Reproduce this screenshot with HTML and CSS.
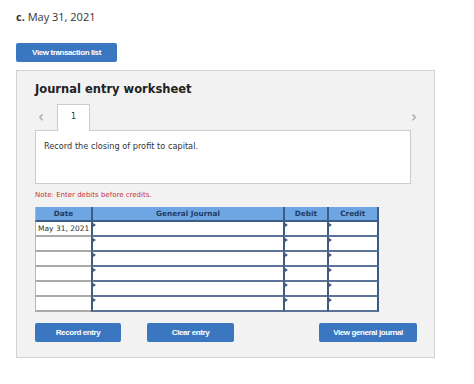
FILE: index.html
```html
<!DOCTYPE html>
<html lang="en">
<head>
    <meta charset="UTF-8">
    <title>Journal entry worksheet</title>
    <link rel="stylesheet" href="styles.css">
</head>
<body>
    <p class="part"><b>c.</b> May 31, 2021</p>
    <button class="btn btn-list">View transaction list</button>

    <div class="worksheet">
        <h2>Journal entry worksheet</h2>
        <div class="tabs">
            <span class="arrow">&lsaquo;</span>
            <span class="tab">1</span>
            <span class="arrow arrow-right">&rsaquo;</span>
        </div>
        <div class="task">Record the closing of profit to capital.</div>
        <p class="note">Note: Enter debits before credits.</p>

        <table class="journal">
            <tr>
                <th class="c-date">Date</th>
                <th class="c-gj">General Journal</th>
                <th class="c-amt">Debit</th>
                <th class="c-amt">Credit</th>
            </tr>
            <tr>
                <td class="date">May 31, 2021</td>
                <td class="inp"></td><td class="inp"></td><td class="inp"></td>
            </tr>
            <tr><td class="date"></td><td class="inp"></td><td class="inp"></td><td class="inp"></td></tr>
            <tr><td class="date"></td><td class="inp"></td><td class="inp"></td><td class="inp"></td></tr>
            <tr><td class="date"></td><td class="inp"></td><td class="inp"></td><td class="inp"></td></tr>
            <tr><td class="date"></td><td class="inp"></td><td class="inp"></td><td class="inp"></td></tr>
            <tr><td class="date"></td><td class="inp"></td><td class="inp"></td><td class="inp"></td></tr>
        </table>

        <div class="actions">
            <button class="btn btn-record">Record entry</button>
            <button class="btn btn-clear">Clear entry</button>
            <button class="btn btn-view">View general journal</button>
        </div>
    </div>
</body>
</html>
```

FILE: styles.css
```css
body {
    margin: 0;
    padding: 0 0 0 16px;
    background-color: #ffffff;
    font-family: "Open Sans", Arial, sans-serif;
    color: #333333;
}
.part {
    margin: 0;
    padding-top: 9px;
    height: 34px;
    font-size: 11px;
    line-height: 16px;
}
.part b {
    font-weight: 700;
}
.btn {
    display: block;
    height: 19px;
    padding: 0;
    border: none;
    border-radius: 2px;
    background-color: #3b77c0;
    color: #ffffff;
    font-family: "Liberation Sans", Arial, sans-serif;
    font-size: 8px;
    font-weight: bold;
    letter-spacing: -0.4px;
    cursor: pointer;
}
.btn-list {
    width: 101px;
}
.worksheet {
    box-sizing: border-box;
    width: 419px;
    height: 288px;
    margin-top: 8px;
    padding: 0 17px 0 18px;
    border: 1px solid #d3d3d3;
    background-color: #f2f2f2;
}
.worksheet h2 {
    margin: 10px 0 0 0;
    font-family: "DejaVu Sans", Verdana, sans-serif;
    font-size: 11.5px;
    line-height: 16px;
    color: #222222;
}
.tabs {
    display: flex;
    align-items: center;
    height: 26px;
    margin-top: 7px;
}
.arrow {
    width: 22px;
    padding-left: 3px;
    font-family: "DejaVu Sans", sans-serif;
    font-size: 15px;
    color: #999999;
    line-height: 20px;
    box-sizing: border-box;
}
.arrow-right {
    margin-left: auto;
    margin-right: -2px;
    width: 8px;
    padding: 0;
}
.tab {
    box-sizing: border-box;
    align-self: flex-end;
    width: 33px;
    height: 27px;
    margin-bottom: -1px;
    padding-top: 7px;
    border: 1px solid #cccccc;
    border-bottom: none;
    background-color: #ffffff;
    text-align: center;
    font-family: "DejaVu Sans", sans-serif;
    font-size: 8px;
    color: #333333;
    position: relative;
}
.task {
    box-sizing: border-box;
    width: 376px;
    height: 54px;
    padding: 10px 8px;
    border: 1px solid #cccccc;
    background-color: #ffffff;
    font-family: "DejaVu Sans", Verdana, sans-serif;
    font-size: 8.2px;
    color: #333333;
}
.note {
    margin: 6px 0 0 0;
    height: 17px;
    font-family: "DejaVu Sans", sans-serif;
    font-size: 7px;
    line-height: 10px;
    color: #c8333a;
}
.journal {
    border-collapse: separate;
    border-spacing: 0;
    width: 344px;
    font-family: "DejaVu Sans", sans-serif;
    font-size: 7.5px;
}
.journal th {
    height: 13px;
    padding: 0;
    background-color: #6ea6e3;
    color: #1f3c66;
    font-size: 7.3px;
    font-weight: bold;
    border-bottom: 2px solid #3e5c86;
    border-left: 2px solid #3e5c86;
}
.journal th.c-date {
    border-left: 1px solid #9bb7d9;
    width: 55px;
}
.journal th.c-gj {
    width: 190px;
}
.journal th:last-child {
    border-right: 2px solid #3e5c86;
}
.journal td {
    height: 13px;
    padding: 0;
    background-color: #ffffff;
}
.journal td.date {
    border-left: 1px solid #b8b8b8;
    border-bottom: 2px solid #a9a9a9;
    padding-left: 2px;
    white-space: nowrap;
    color: #333333;
}
.journal td.inp {
    position: relative;
    border-left: 2px solid #3f5b80;
    border-bottom: 2px solid #5a7397;
}
.journal td.inp:last-child {
    border-right: 2px solid #3f5b80;
}
.journal td.inp::before {
    content: "";
    position: absolute;
    left: 0;
    top: 1px;
    border-left: 3px solid #3f5b80;
    border-top: 2px solid transparent;
    border-bottom: 2px solid transparent;
}
.actions {
    display: flex;
    margin-top: 11px;
}
.btn-record {
    width: 86px;
}
.btn-clear {
    width: 87px;
    margin-left: 26px;
}
.btn-view {
    width: 98px;
    margin-left: auto;
}
```
